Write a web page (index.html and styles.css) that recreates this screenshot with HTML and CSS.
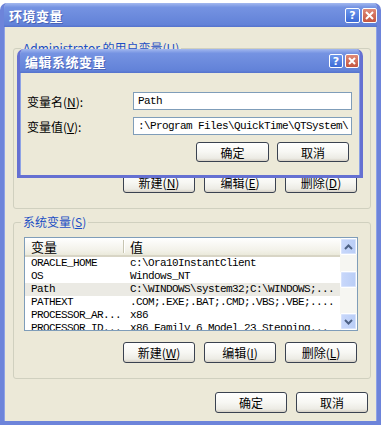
FILE: index.html
```html
<!DOCTYPE html>
<html lang="zh-CN">
<head>
  <meta charset="UTF-8" />
  <title>环境变量</title>
  <link rel="stylesheet" href="styles.css">
</head>
<body>

  <!-- Dialog: 环境变量 -->
  <div class="window main">
    <div class="titlebar">
      <span class="title">环境变量</span>
      <div class="tbtns">
        <span class="tb help">?</span>
        <span class="tb close"><svg width="9" height="9" viewBox="0 0 9 9"><path d="M1 1L8 8M8 1L1 8" stroke="#fff" stroke-width="2"/></svg></span>
      </div>
    </div>
    <div class="client">
      <div class="group user">
        <span class="group-title">Administrator 的用户变量(<u>U</u>)</span>
        <!-- hidden behind the edit dialog -->
        <div class="listview lv-user">
          <div class="lv-body">
            <div class="lv-head"></div>
          </div>
        </div>
        <div class="btnrow">
          <button>新建(<u>N</u>)</button>
          <button>编辑(<u>E</u>)</button>
          <button>删除(<u>D</u>)</button>
        </div>
      </div>

      <div class="group sys">
        <span class="group-title">系统变量(<u>S</u>)</span>
        <div class="listview lv-sys">
          <div class="lv-body">
            <div class="lv-head"><span class="c1">变量</span><span class="c2">值</span></div>
            <div class="lv-row"><span class="c1">ORACLE_HOME</span><span class="c2">c:\Ora10InstantClient</span></div>
            <div class="lv-row"><span class="c1">OS</span><span class="c2">Windows_NT</span></div>
            <div class="lv-row sel"><span class="c1">Path</span><span class="c2">C:\WINDOWS\system32;C:\WINDOWS;...</span></div>
            <div class="lv-row"><span class="c1">PATHEXT</span><span class="c2">.COM;.EXE;.BAT;.CMD;.VBS;.VBE;....</span></div>
            <div class="lv-row"><span class="c1">PROCESSOR_AR...</span><span class="c2">x86</span></div>
            <div class="lv-row"><span class="c1">PROCESSOR_ID...</span><span class="c2">x86 Family 6 Model 23 Stepping...</span></div>
          </div>
          <div class="scrollbar">
            <span class="sb-btn"><svg width="9" height="6" viewBox="0 0 9 6"><path d="M1 5L4.5 1.5L8 5" fill="none" stroke="#4d6185" stroke-width="2"/></svg></span>
            <span class="sb-gap"></span>
            <span class="sb-thumb"></span>
            <span class="sb-fill"></span>
            <span class="sb-btn"><svg width="9" height="6" viewBox="0 0 9 6"><path d="M1 1L4.5 4.5L8 1" fill="none" stroke="#4d6185" stroke-width="2"/></svg></span>
          </div>
        </div>
        <div class="btnrow">
          <button>新建(<u>W</u>)</button>
          <button>编辑(<u>I</u>)</button>
          <button>删除(<u>L</u>)</button>
        </div>
      </div>

      <div class="btnrow dlg">
        <button>确定</button>
        <button>取消</button>
      </div>
    </div>
  </div>

  <!-- Dialog: 编辑系统变量 -->
  <div class="window edit">
    <div class="titlebar">
      <span class="title">编辑系统变量</span>
      <div class="tbtns">
        <span class="tb help">?</span>
        <span class="tb close"><svg width="8" height="8" viewBox="0 0 8 8"><path d="M1 1L7 7M7 1L1 7" stroke="#fff" stroke-width="2"/></svg></span>
      </div>
    </div>
    <div class="client form">
      <div class="field">
        <label>变量名(<u>N</u>):</label>
        <div class="input">Path</div>
      </div>
      <div class="field">
        <label>变量值(<u>V</u>):</label>
        <div class="input">:\Program Files\QuickTime\QTSystem\</div>
      </div>
      <div class="btnrow edit-btns">
        <button>确定</button>
        <button>取消</button>
      </div>
    </div>
  </div>

</body>
</html>
```

FILE: styles.css
```css
body {
  margin: 0;
  background: #fff;
  font-family: "Noto Sans CJK SC", "DejaVu Sans", sans-serif;
  font-size: 12px;
  color: #000;
}
u {
  text-decoration: underline;
  text-underline-offset: 1px;
}

/* window frame */
.window {
  position: absolute;
  background: #ece9d8;
  border: solid #6d84da;
  border-width: 0 4px 4px;
  border-radius: 7px 7px 0 0;
  overflow: hidden;
  box-shadow: inset 1px 0 0 #8ea2e6, inset -1px 0 0 #8ea2e6;
}
.main {
  left: 0;
  top: 3px;
  width: 373px;
}
.edit {
  left: 17px;
  top: 49px;
  width: 340px;
  border-width: 0 3px 3px;
  border-color: #6570d2;
}
.titlebar {
  height: 24px;
  margin: 0 -4px;
  padding: 0 4px 0 9px;
  display: flex;
  align-items: center;
  justify-content: space-between;
  background: linear-gradient(#a3b8ef 0%, #7593e2 18%, #6a89dc 60%, #6282d8 90%, #5572cc 100%);
}
.edit .titlebar {
  margin: 0 -3px;
  padding: 0 4px 0 8px;
}
.title {
  color: #fff;
  font-size: 13px;
  font-weight: bold;
  text-shadow: 1px 1px 0 #4a64b8;
  letter-spacing: 0.5px;
}
.tbtns {
  display: flex;
  gap: 2px;
}
.tb {
  width: 13px;
  height: 13px;
  border: 1px solid #fff;
  border-radius: 2px;
  display: flex;
  align-items: center;
  justify-content: center;
  color: #fff;
  font: bold 11px "DejaVu Sans", sans-serif;
}
.help {
  background: linear-gradient(#6e98ec, #3c6ad6);
}
.close {
  background: linear-gradient(#e08a78, #c4553f);
}
.edit .tb {
  width: 12px;
  height: 12px;
}

.client {
  padding: 21px 6px 8px 9px;
}

/* group boxes */
.group {
  position: relative;
  border: 1px solid #d0d0bf;
  border-radius: 3px;
  padding: 14px 12px 15px 10px;
}
.sys {
  margin-top: 13px;
}
.group-title {
  position: absolute;
  top: -9px;
  left: 7px;
  padding: 0 2px;
  background: #ece9d8;
  color: #1d4fc4;
  line-height: 16px;
}

/* list views */
.listview {
  display: flex;
  border: 1px solid #7f9db9;
  background: #fff;
  overflow: hidden;
}
.lv-user {
  height: 96px;
}
.lv-sys {
  height: 92px;
}
.lv-body {
  flex: 1;
  overflow: hidden;
}
.lv-head {
  height: 17px;
  display: flex;
  align-items: center;
  background: linear-gradient(#fff, #f3f2ea 70%, #ebeadb);
  border-bottom: 2px solid #d8d5c5;
}
.lv-head .c1 {
  border-right: 1px solid #c7c5b2;
  box-shadow: 1px 0 0 #fff;
}
.lv-head span {
  font-size: 13px;
  line-height: 13px;
}
.c1 {
  width: 92px;
  padding-left: 6px;
  flex-shrink: 0;
  white-space: nowrap;
}
.c2 {
  padding-left: 6px;
  white-space: nowrap;
}
.lv-row {
  display: flex;
  height: 13px;
  line-height: 13px;
  font-family: "Liberation Mono", monospace;
  font-size: 11px;
  letter-spacing: -0.6px;
}
.lv-row .c1 {
  width: 93px;
}
.lv-row.sel {
  background: #ebeae4;
}

/* scrollbar */
.scrollbar {
  width: 17px;
  display: flex;
  flex-direction: column;
  background: #f6f6f2;
}
.sb-btn,
.sb-thumb {
  height: 15px;
  border: 1px solid #fff;
  border-radius: 2px;
  background: linear-gradient(90deg, #c9d8fb, #b9cdf6);
  box-shadow: inset 0 0 0 1px #d6e2fc;
  display: flex;
  align-items: center;
  justify-content: center;
}
.sb-gap {
  height: 16px;
}
.sb-fill {
  flex: 1;
}

/* buttons */
.btnrow {
  display: flex;
  justify-content: flex-end;
  gap: 9px;
  margin-top: 11px;
  padding-right: 1px;
}
.dlg {
  margin-top: 13px;
  padding-right: 3px;
}
button {
  width: 72px;
  height: 21px;
  padding: 0;
  border: 1px solid #3a4250;
  border-radius: 3px;
  background: linear-gradient(#fff 0%, #f7f7f3 50%, #ecebe4 85%, #d6d0c5 100%);
  font-family: "Noto Sans CJK SC", sans-serif;
  font-size: 12px;
  line-height: 17px;
  color: #000;
}

/* edit dialog form */
.form {
  padding: 19px 8px 13px 7px;
}
.field {
  display: flex;
  align-items: center;
  height: 18px;
  margin-bottom: 7px;
}
.field label {
  width: 106px;
  font-size: 12px;
}
.input {
  width: 213px;
  height: 16px;
  border: 1px solid #7f9db9;
  background: #fff;
  padding-left: 4px;
  font-family: "Liberation Mono", monospace;
  font-size: 11px;
  letter-spacing: -0.6px;
  line-height: 16px;
  white-space: nowrap;
  overflow: hidden;
}
.edit-btns {
  margin-top: 5px;
  gap: 8px;
  padding-right: 3px;
}
.edit-btns button {
  height: 20px;
}
.edit-btns button:first-child {
  width: 73px;
}
```
